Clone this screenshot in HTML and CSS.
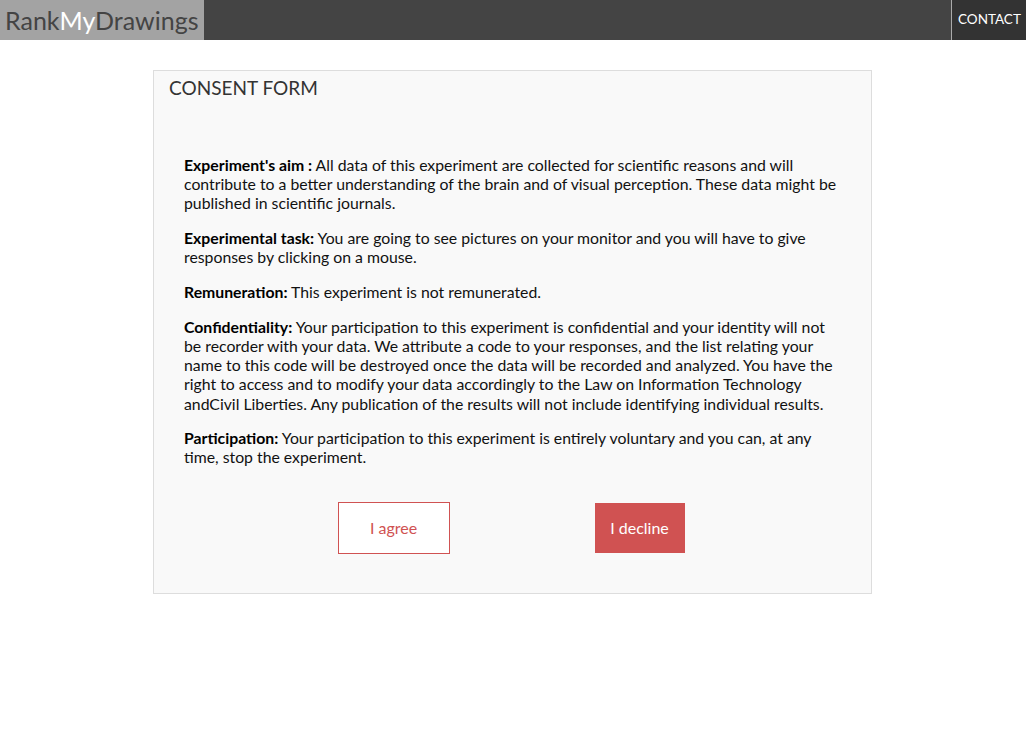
FILE: index.html
```html
<!DOCTYPE html>
<html>
<head>
<meta charset="utf-8">
<title>RankMyDrawings</title>
<link rel="stylesheet" href="styles.css">
</head>
<body>
<header class="topbar">
  <div class="logo">Rank<span class="logo-my">My</span>Drawings</div>
  <nav class="nav">
    <a class="nav-link" href="#">CONTACT</a>
  </nav>
</header>
<main class="page">
  <section class="card">
    <h3 class="card-title">CONSENT FORM</h3>
    <div class="card-body">
      <p><b>Experiment's aim :</b> All data of this experiment are collected for scientific reasons and will contribute to a better understanding of the brain and of visual perception. These data might be published in scientific journals.</p>
      <p><b>Experimental task:</b> You are going to see pictures on your monitor and you will have to give responses by clicking on a mouse.</p>
      <p><b>Remuneration:</b> This experiment is not remunerated.</p>
      <p><b>Confidentiality:</b> Your participation to this experiment is confidential and your identity will not be recorder with your data. We attribute a code to your responses, and the list relating your name to this code will be destroyed once the data will be recorded and analyzed. You have the right to access and to modify your data accordingly to the Law on Information Technology andCivil Liberties. Any publication of the results will not include identifying individual results.</p>
      <p><b>Participation:</b> Your participation to this experiment is entirely voluntary and you can, at any time, stop the experiment.</p>
      <div class="actions">
        <button class="btn btn-agree">I agree</button>
        <button class="btn btn-decline">I decline</button>
      </div>
    </div>
  </section>
</main>
</body>
</html>
```
FILE: styles.css
```css
* { box-sizing: border-box; }
html, body { margin: 0; padding: 0; }
body {
  font-family: Lato, "Open Sans", "Liberation Sans", sans-serif;
  background: #fff;
  color: #111;
}
.topbar {
  height: 40px;
  background: #444;
  display: flex;
  justify-content: space-between;
  align-items: stretch;
}
.logo {
  width: 204px;
  background: #a3a3a3;
  color: #444;
  font-size: 25px;
  line-height: 40px;
  padding-left: 5px;
  white-space: nowrap;
}
.logo-my { color: #fff; }
.nav {
  display: flex;
  background: #333;
  border-left: 1px solid #aaa;
  width: 75px;
}
.nav-link {
  color: #fff;
  text-decoration: none;
  font-size: 13.5px;
  line-height: 38px;
  padding-left: 6px;
}
.page {
  padding: 30px 1px 0 0;
}
.card {
  width: 719px;
  margin: 0 auto;
  background: #f9f9f9;
  border: 1px solid #ddd;
  padding: 6px 0 39px;
}
.card-title {
  margin: 0;
  padding: 0 15px;
  font-size: 19px;
  line-height: 22px;
  font-weight: 400;
  color: #333;
}
.card-body {
  padding: 56px 30px 0;
}
.card-body p {
  margin: 0 0 15.5px;
  font-size: 15.8px;
  line-height: 19.2px;
  color: #111;
}
.card-body b { font-weight: 700; color: #000; }
.actions {
  display: flex;
  justify-content: center;
  gap: 145px;
  padding-top: 21px;
  padding-right: 3px;
}
.btn {
  font-family: inherit;
  font-size: 16px;
  height: 50px;
  border: none;
  cursor: pointer;
  padding: 0 0 2px;
}
.btn-agree {
  width: 112px;
  height: 52px;
  margin-top: -1px;
  background: #fff;
  color: #d05252;
  border: 1px solid #d05252;
}
.btn-decline {
  width: 90px;
  background: #d05252;
  color: #fff;
}
```
